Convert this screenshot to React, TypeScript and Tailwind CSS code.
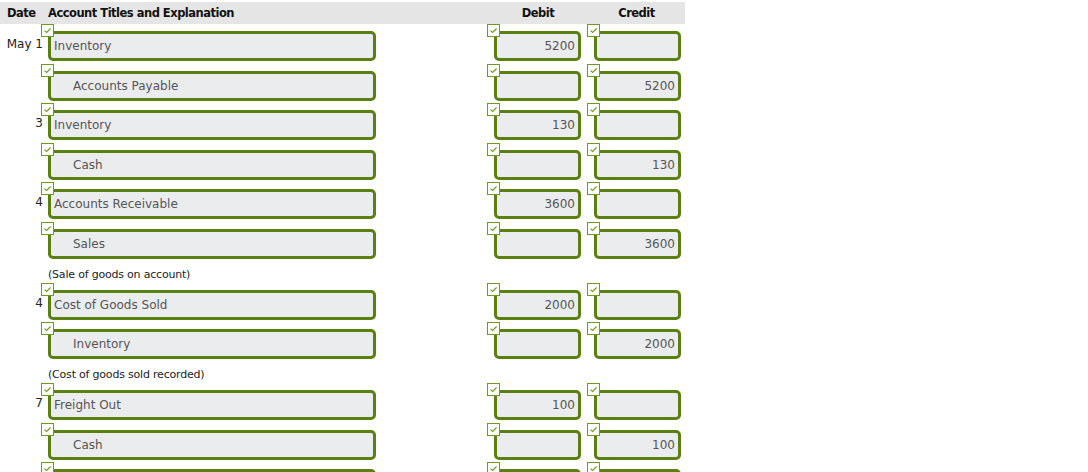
type Row = {
  date?: string;
  account: string;
  indent?: boolean;
  debit?: string;
  credit?: string;
};

type Block = { rows: Row[]; note?: string };

const blocks: Block[] = [
  {
    rows: [
      { date: 'May 1', account: 'Inventory', debit: '5200' },
      { account: 'Accounts Payable', indent: true, credit: '5200' },
    ],
  },
  {
    rows: [
      { date: '3', account: 'Inventory', debit: '130' },
      { account: 'Cash', indent: true, credit: '130' },
    ],
  },
  {
    rows: [
      { date: '4', account: 'Accounts Receivable', debit: '3600' },
      { account: 'Sales', indent: true, credit: '3600' },
    ],
    note: '(Sale of goods on account)',
  },
  {
    rows: [
      { date: '4', account: 'Cost of Goods Sold', debit: '2000' },
      { account: 'Inventory', indent: true, credit: '2000' },
    ],
    note: '(Cost of goods sold recorded)',
  },
  {
    rows: [
      { date: '7', account: 'Freight Out', debit: '100' },
      { account: 'Cash', indent: true, credit: '100' },
    ],
  },
  {
    rows: [{ account: '' }],
  },
];

const Check = () => (
  <div className="relative z-10 w-[13px] h-[13px] border border-[#6f9a1f] bg-white flex items-center justify-center">
    <svg width="9" height="7" viewBox="0 0 9 7" fill="none">
      <path d="M1.5 3.6 L3.6 5.5 L7.6 1.5" stroke="#6f9a1f" strokeWidth="1.1" />
    </svg>
  </div>
);

const boxClass =
  'ml-[7px] -mt-[6px] h-[30px] border-[3px] border-[#5b8012] rounded-[5px] bg-[#ebecee] text-[#555] text-[12px] flex items-center';

const Cell = ({ value }: { value?: string }) => (
  <div className="w-[94px] flex flex-col">
    <Check />
    <div className={boxClass + ' w-[87px] justify-end pr-[3px]'}>{value}</div>
  </div>
);

const EntryRow = ({ row }: { row: Row }) => {
  let accClass = boxClass + ' w-[328px]';
  if (row.indent) {
    accClass += ' pl-[22px]';
  } else {
    accClass += ' pl-[3px]';
  }

  return (
    <div className="flex h-[39.5px]">
      <div className="w-[44px] shrink-0 text-right pr-[1px] pt-[13px] text-[12px] leading-[14px] text-[#222]">
        {row.date}
      </div>
      <div className="w-[446px] shrink-0 flex flex-col -ml-[3px]">
        <Check />
        <div className={accClass}>{row.account}</div>
      </div>
      <div className="w-[100px] shrink-0">
        <Cell value={row.debit} />
      </div>
      <Cell value={row.credit} />
    </div>
  );
};

export default function App() {
  return (
    <div
      className="w-[1088px] h-[472px] overflow-hidden bg-white pt-[2px]"
      style={{ fontFamily: '"DejaVu Sans", Verdana, sans-serif' }}
    >
      <div className="w-[685px] h-[22px] pt-[2px] bg-[#e5e5e5] flex items-center text-[11.5px] tracking-[-0.5px] font-bold text-[#111]">
        <div className="w-[48px] pl-[7px]">Date</div>
        <div className="w-[440px]">Account Titles and Explanation</div>
        <div className="w-[100px] text-center">Debit</div>
        <div className="w-[97px] text-center">Credit</div>
      </div>
      <div>
        {blocks.map((block, i) => (
          <div key={i}>
            {block.rows.map((row, j) => (
              <EntryRow key={j} row={row} />
            ))}
            {block.note && (
              <div className="h-[17px] mt-[4.5px] pl-[48px] text-[11px] tracking-[-0.2px] leading-[18px] text-[#222]">
                {block.note}
              </div>
            )}
          </div>
        ))}
      </div>
    </div>
  );
}
